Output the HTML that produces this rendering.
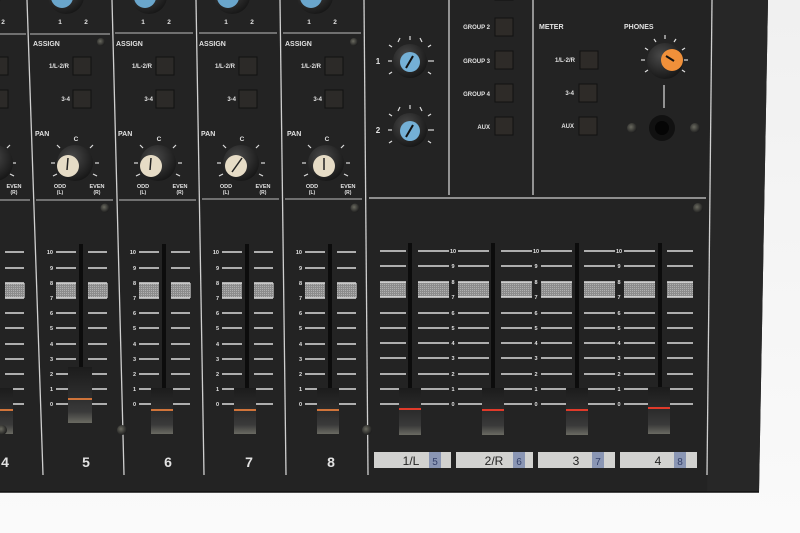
<!DOCTYPE html>
<html><head><meta charset="utf-8"><style>
html,body{margin:0;padding:0;background:#f2f2f2;}
svg{display:block}
text{font-family:"Liberation Sans",sans-serif;font-weight:bold;fill:#e2e2e2}
</style></head><body>
<svg width="800" height="533" viewBox="0 0 800 533" xmlns="http://www.w3.org/2000/svg">
<defs>
<linearGradient id="bg" x1="0" y1="0" x2="0" y2="1"><stop offset="0" stop-color="#f0f0f0"/><stop offset="1" stop-color="#fafafa"/></linearGradient>
<linearGradient id="cap" x1="0" y1="0" x2="0" y2="1"><stop offset="0" stop-color="#1c1c1c"/><stop offset="0.55" stop-color="#2e2e2e"/><stop offset="0.8" stop-color="#3a3a3a"/><stop offset="1" stop-color="#6a6a62"/></linearGradient>
<pattern id="mesh" width="2" height="2" patternUnits="userSpaceOnUse"><rect width="2" height="2" fill="#8c8c8c"/><rect width="1" height="1" fill="#b0b0b0"/></pattern>
<radialGradient id="knob" cx="0.4" cy="0.35" r="0.7"><stop offset="0" stop-color="#4a4a4a"/><stop offset="1" stop-color="#151515"/></radialGradient>
<radialGradient id="screw" cx="0.4" cy="0.4" r="0.6"><stop offset="0" stop-color="#6a6a60"/><stop offset="1" stop-color="#1e1e1e"/></radialGradient>
</defs>
<rect width="800" height="533" fill="url(#bg)"/>
<polygon points="0,0 768,0 759,492 0,492" fill="#232323"/>
<polygon points="712,0 768,0 759,492 707,492" fill="#272727"/>
<line x1="0" y1="492" x2="759" y2="492" stroke="#111" stroke-width="1.5"/>

<!-- channel dividers -->
<g stroke="#cfcfcf" stroke-width="1.3">
<line x1="27" y1="0" x2="43" y2="475"/>
<line x1="112" y1="0" x2="124" y2="475"/>
<line x1="196" y1="0" x2="204" y2="475"/>
<line x1="280" y1="0" x2="286" y2="475"/>
<line x1="364" y1="0" x2="368" y2="475"/>
<line x1="449" y1="0" x2="449" y2="195"/>
<line x1="533" y1="0" x2="533" y2="195"/>
<line x1="712" y1="0" x2="707" y2="475"/>
<line x1="369" y1="198" x2="706" y2="198"/>
</g>
<g stroke="#bdbdbd" stroke-width="1">
<line x1="0" y1="34" x2="26" y2="34"/><line x1="30" y1="34" x2="110" y2="34"/><line x1="115" y1="33" x2="193" y2="33"/><line x1="199" y1="33" x2="277" y2="33"/><line x1="283" y1="33" x2="361" y2="33"/>
<line x1="0" y1="200" x2="30" y2="200"/><line x1="36" y1="200" x2="113" y2="200"/><line x1="119" y1="200" x2="196" y2="200"/><line x1="202" y1="199" x2="279" y2="199"/><line x1="285" y1="199" x2="362" y2="199"/>
</g>

<!-- CHANNEL STRIPS: defined once per channel -->
<g id="chs">
<!-- ch5 at offset 0 -->
<g transform="translate(0,0)">
<circle cx="66" cy="-4" r="18" fill="url(#knob)"/><circle cx="62" cy="-3" r="11" fill="#6aa6cc"/>
<text x="60" y="24" font-size="6.5" text-anchor="middle">1</text><text x="86" y="24" font-size="6.5" text-anchor="middle">2</text>
<text x="33" y="46" font-size="7">ASSIGN</text><circle cx="101" cy="42" r="4" fill="url(#screw)"/>
<text x="69" y="68" font-size="6" text-anchor="end">1/L-2/R</text><rect x="73" y="57" width="18" height="18" fill="#2c2a28" stroke="#111"/>
<text x="70" y="101" font-size="6" text-anchor="end">3-4</text><rect x="73" y="90" width="18" height="18" fill="#2c2a28" stroke="#111"/>
<text x="35" y="136" font-size="7">PAN</text><text x="76" y="141" font-size="6.5" text-anchor="middle">C</text>
<g stroke="#ddd" stroke-width="1.2"><line x1="55" y1="163" x2="51" y2="163"/><line x1="95" y1="163" x2="99" y2="163"/><line x1="60" y1="148" x2="57" y2="145"/><line x1="90" y1="148" x2="93" y2="145"/><line x1="57" y1="174" x2="53" y2="176"/><line x1="93" y1="174" x2="97" y2="176"/></g>
<circle cx="75" cy="163" r="18" fill="url(#knob)"/><circle cx="68" cy="166" r="11" fill="#e6dcc6"/><line x1="68" y1="158" x2="67" y2="170" stroke="#222" stroke-width="1.5"/>
<text x="60" y="188" font-size="5.5" text-anchor="middle">ODD</text><text x="60" y="194" font-size="5" text-anchor="middle">(L)</text>
<text x="97" y="188" font-size="5.5" text-anchor="middle">EVEN</text><text x="97" y="194" font-size="5" text-anchor="middle">(R)</text>
<circle cx="105" cy="208" r="4.5" fill="url(#screw)"/>
<rect x="56" y="283" width="20" height="15" fill="url(#mesh)"/><rect x="88" y="283" width="20" height="15" fill="url(#mesh)"/>
<path d="M56 252H76M88 252H107M56 268H76M88 268H107M56 283H76M88 283H107M56 298H76M88 298H107M56 313H76M88 313H107M56 328H76M88 328H107M56 344H76M88 344H107M56 359H76M88 359H107M56 374H76M88 374H107M56 389H76M88 389H107M56 404H76M88 404H107" stroke="#dcdcdc" stroke-width="1.5"/>
<g font-size="5.5" text-anchor="end"><text x="53" y="254">10</text><text x="53" y="270">9</text><text x="53" y="285">8</text><text x="53" y="300">7</text><text x="53" y="315">6</text><text x="53" y="330">5</text><text x="53" y="346">4</text><text x="53" y="361">3</text><text x="53" y="376">2</text><text x="53" y="391">1</text><text x="53" y="406">0</text></g>
<rect x="79" y="244" width="4" height="140" fill="#0c0c0c"/>
<text x="86" y="467" font-size="14" text-anchor="middle">5</text>
</g>
</g>
<!-- ch6,7,8,4 -->
<g transform="translate(83,0)">
<circle cx="66" cy="-4" r="18" fill="url(#knob)"/><circle cx="62" cy="-3" r="11" fill="#6aa6cc"/>
<text x="60" y="24" font-size="6.5" text-anchor="middle">1</text><text x="86" y="24" font-size="6.5" text-anchor="middle">2</text>
<text x="33" y="46" font-size="7">ASSIGN</text>
<text x="69" y="68" font-size="6" text-anchor="end">1/L-2/R</text><rect x="73" y="57" width="18" height="18" fill="#2c2a28" stroke="#111"/>
<text x="70" y="101" font-size="6" text-anchor="end">3-4</text><rect x="73" y="90" width="18" height="18" fill="#2c2a28" stroke="#111"/>
<text x="35" y="136" font-size="7">PAN</text><text x="76" y="141" font-size="6.5" text-anchor="middle">C</text>
<g stroke="#ddd" stroke-width="1.2"><line x1="55" y1="163" x2="51" y2="163"/><line x1="95" y1="163" x2="99" y2="163"/><line x1="60" y1="148" x2="57" y2="145"/><line x1="90" y1="148" x2="93" y2="145"/><line x1="57" y1="174" x2="53" y2="176"/><line x1="93" y1="174" x2="97" y2="176"/></g>
<circle cx="75" cy="163" r="18" fill="url(#knob)"/><circle cx="68" cy="166" r="11" fill="#e6dcc6"/><line x1="68" y1="158" x2="67" y2="170" stroke="#222" stroke-width="1.5"/>
<text x="60" y="188" font-size="5.5" text-anchor="middle">ODD</text><text x="60" y="194" font-size="5" text-anchor="middle">(L)</text>
<text x="97" y="188" font-size="5.5" text-anchor="middle">EVEN</text><text x="97" y="194" font-size="5" text-anchor="middle">(R)</text>
<rect x="56" y="283" width="20" height="15" fill="url(#mesh)"/><rect x="88" y="283" width="20" height="15" fill="url(#mesh)"/>
<path d="M56 252H76M88 252H107M56 268H76M88 268H107M56 283H76M88 283H107M56 298H76M88 298H107M56 313H76M88 313H107M56 328H76M88 328H107M56 344H76M88 344H107M56 359H76M88 359H107M56 374H76M88 374H107M56 389H76M88 389H107M56 404H76M88 404H107" stroke="#dcdcdc" stroke-width="1.5"/>
<g font-size="5.5" text-anchor="end"><text x="53" y="254">10</text><text x="53" y="270">9</text><text x="53" y="285">8</text><text x="53" y="300">7</text><text x="53" y="315">6</text><text x="53" y="330">5</text><text x="53" y="346">4</text><text x="53" y="361">3</text><text x="53" y="376">2</text><text x="53" y="391">1</text><text x="53" y="406">0</text></g>
<rect x="79" y="244" width="4" height="150" fill="#0c0c0c"/>
<text x="85" y="467" font-size="14" text-anchor="middle">6</text>
</g>
<g transform="translate(166,0)">
<circle cx="66" cy="-4" r="18" fill="url(#knob)"/><circle cx="62" cy="-3" r="11" fill="#6aa6cc"/>
<text x="60" y="24" font-size="6.5" text-anchor="middle">1</text><text x="86" y="24" font-size="6.5" text-anchor="middle">2</text>
<text x="33" y="46" font-size="7">ASSIGN</text>
<text x="69" y="68" font-size="6" text-anchor="end">1/L-2/R</text><rect x="73" y="57" width="18" height="18" fill="#2c2a28" stroke="#111"/>
<text x="70" y="101" font-size="6" text-anchor="end">3-4</text><rect x="73" y="90" width="18" height="18" fill="#2c2a28" stroke="#111"/>
<text x="35" y="136" font-size="7">PAN</text><text x="76" y="141" font-size="6.5" text-anchor="middle">C</text>
<g stroke="#ddd" stroke-width="1.2"><line x1="55" y1="163" x2="51" y2="163"/><line x1="95" y1="163" x2="99" y2="163"/><line x1="60" y1="148" x2="57" y2="145"/><line x1="90" y1="148" x2="93" y2="145"/><line x1="57" y1="174" x2="53" y2="176"/><line x1="93" y1="174" x2="97" y2="176"/></g>
<circle cx="75" cy="163" r="18" fill="url(#knob)"/><circle cx="70" cy="166" r="11" fill="#e6dcc6"/><line x1="76" y1="158" x2="66" y2="172" stroke="#222" stroke-width="1.5"/>
<text x="60" y="188" font-size="5.5" text-anchor="middle">ODD</text><text x="60" y="194" font-size="5" text-anchor="middle">(L)</text>
<text x="97" y="188" font-size="5.5" text-anchor="middle">EVEN</text><text x="97" y="194" font-size="5" text-anchor="middle">(R)</text>
<rect x="56" y="283" width="20" height="15" fill="url(#mesh)"/><rect x="88" y="283" width="20" height="15" fill="url(#mesh)"/>
<path d="M56 252H76M88 252H107M56 268H76M88 268H107M56 283H76M88 283H107M56 298H76M88 298H107M56 313H76M88 313H107M56 328H76M88 328H107M56 344H76M88 344H107M56 359H76M88 359H107M56 374H76M88 374H107M56 389H76M88 389H107M56 404H76M88 404H107" stroke="#dcdcdc" stroke-width="1.5"/>
<g font-size="5.5" text-anchor="end"><text x="53" y="254">10</text><text x="53" y="270">9</text><text x="53" y="285">8</text><text x="53" y="300">7</text><text x="53" y="315">6</text><text x="53" y="330">5</text><text x="53" y="346">4</text><text x="53" y="361">3</text><text x="53" y="376">2</text><text x="53" y="391">1</text><text x="53" y="406">0</text></g>
<rect x="79" y="244" width="4" height="150" fill="#0c0c0c"/>
<text x="83" y="467" font-size="14" text-anchor="middle">7</text>
</g>
<g transform="translate(249,0)">
<circle cx="66" cy="-4" r="18" fill="url(#knob)"/><circle cx="62" cy="-3" r="11" fill="#6aa6cc"/>
<text x="60" y="24" font-size="6.5" text-anchor="middle">1</text><text x="86" y="24" font-size="6.5" text-anchor="middle">2</text>
<text x="36" y="46" font-size="7">ASSIGN</text><circle cx="105" cy="42" r="4" fill="url(#screw)"/>
<text x="72" y="68" font-size="6" text-anchor="end">1/L-2/R</text><rect x="76" y="57" width="18" height="18" fill="#2c2a28" stroke="#111"/>
<text x="73" y="101" font-size="6" text-anchor="end">3-4</text><rect x="76" y="90" width="18" height="18" fill="#2c2a28" stroke="#111"/>
<text x="38" y="136" font-size="7">PAN</text><text x="78" y="141" font-size="6.5" text-anchor="middle">C</text>
<g stroke="#ddd" stroke-width="1.2"><line x1="57" y1="163" x2="53" y2="163"/><line x1="97" y1="163" x2="101" y2="163"/><line x1="62" y1="148" x2="59" y2="145"/><line x1="92" y1="148" x2="95" y2="145"/><line x1="59" y1="174" x2="55" y2="176"/><line x1="95" y1="174" x2="99" y2="176"/></g>
<circle cx="77" cy="163" r="18" fill="url(#knob)"/><circle cx="75" cy="166" r="11" fill="#e6dcc6"/><line x1="75" y1="158" x2="75" y2="170" stroke="#222" stroke-width="1.5"/>
<text x="63" y="188" font-size="5.5" text-anchor="middle">ODD</text><text x="63" y="194" font-size="5" text-anchor="middle">(L)</text>
<text x="99" y="188" font-size="5.5" text-anchor="middle">EVEN</text><text x="99" y="194" font-size="5" text-anchor="middle">(R)</text>
<circle cx="106" cy="208" r="4.5" fill="url(#screw)"/>
<rect x="56" y="283" width="20" height="15" fill="url(#mesh)"/><rect x="88" y="283" width="20" height="15" fill="url(#mesh)"/>
<path d="M56 252H76M88 252H107M56 268H76M88 268H107M56 283H76M88 283H107M56 298H76M88 298H107M56 313H76M88 313H107M56 328H76M88 328H107M56 344H76M88 344H107M56 359H76M88 359H107M56 374H76M88 374H107M56 389H76M88 389H107M56 404H76M88 404H107" stroke="#dcdcdc" stroke-width="1.5"/>
<g font-size="5.5" text-anchor="end"><text x="53" y="254">10</text><text x="53" y="270">9</text><text x="53" y="285">8</text><text x="53" y="300">7</text><text x="53" y="315">6</text><text x="53" y="330">5</text><text x="53" y="346">4</text><text x="53" y="361">3</text><text x="53" y="376">2</text><text x="53" y="391">1</text><text x="53" y="406">0</text></g>
<rect x="79" y="244" width="4" height="150" fill="#0c0c0c"/>
<text x="82" y="467" font-size="14" text-anchor="middle">8</text>
</g>
<g transform="translate(-83,0)">
<circle cx="66" cy="-4" r="18" fill="url(#knob)"/><circle cx="62" cy="-3" r="11" fill="#6aa6cc"/>
<text x="86" y="24" font-size="6.5" text-anchor="middle">2</text>
<rect x="73" y="57" width="18" height="18" fill="#2c2a28" stroke="#111"/><rect x="73" y="90" width="18" height="18" fill="#2c2a28" stroke="#111"/>
<g stroke="#ddd" stroke-width="1.2"><line x1="95" y1="163" x2="99" y2="163"/><line x1="90" y1="148" x2="93" y2="145"/><line x1="93" y1="174" x2="97" y2="176"/></g>
<circle cx="78" cy="163" r="18" fill="url(#knob)"/>
<text x="97" y="188" font-size="5.5" text-anchor="middle">EVEN</text><text x="97" y="194" font-size="5" text-anchor="middle">(R)</text>
<rect x="88" y="283" width="20" height="15" fill="url(#mesh)"/>
<path d="M88 252H107M88 268H107M88 283H107M88 298H107M88 313H107M88 328H107M88 344H107M88 359H107M88 374H107M88 389H107M88 404H107" stroke="#dcdcdc" stroke-width="1.5"/>
<rect x="79" y="244" width="4" height="150" fill="#0c0c0c"/>
<text x="88" y="467" font-size="14" text-anchor="middle">4</text>
</g>

<!-- channel fader caps -->
<g>
<rect x="-5" y="388" width="18" height="46" fill="url(#cap)"/><rect x="-5" y="409" width="18" height="2" fill="#d0743a"/>
<rect x="68" y="367" width="24" height="56" fill="url(#cap)"/><rect x="68" y="398" width="24" height="2" fill="#d0743a"/>
<rect x="151" y="388" width="22" height="46" fill="url(#cap)"/><rect x="151" y="409" width="22" height="2" fill="#d0743a"/>
<rect x="234" y="388" width="22" height="46" fill="url(#cap)"/><rect x="234" y="409" width="22" height="2" fill="#d0743a"/>
<rect x="317" y="388" width="22" height="46" fill="url(#cap)"/><rect x="317" y="409" width="22" height="2" fill="#d0743a"/>
</g>
<circle cx="122" cy="430" r="5" fill="url(#screw)"/><circle cx="367" cy="430" r="5" fill="url(#screw)"/><circle cx="2" cy="430" r="5" fill="url(#screw)"/>

<!-- RIGHT TOP SECTION -->
<text x="378" y="64" font-size="8" text-anchor="middle">1</text>
<text x="378" y="133" font-size="8" text-anchor="middle">2</text>
<g stroke="#ddd" stroke-width="1.2">
<line x1="388" y1="61" x2="392" y2="61"/><line x1="428" y1="61" x2="434" y2="61"/><line x1="410" y1="36" x2="410" y2="40"/><line x1="400" y1="38" x2="398" y2="42"/><line x1="420" y1="38" x2="422" y2="42"/><line x1="392" y1="47" x2="389" y2="45"/><line x1="428" y1="47" x2="431" y2="45"/><line x1="392" y1="72" x2="389" y2="74"/><line x1="428" y1="72" x2="431" y2="74"/>
<line x1="388" y1="130" x2="392" y2="130"/><line x1="428" y1="130" x2="434" y2="130"/><line x1="410" y1="105" x2="410" y2="109"/><line x1="400" y1="107" x2="398" y2="111"/><line x1="420" y1="107" x2="422" y2="111"/><line x1="392" y1="116" x2="389" y2="114"/><line x1="428" y1="116" x2="431" y2="114"/><line x1="392" y1="141" x2="389" y2="143"/><line x1="428" y1="141" x2="431" y2="143"/>
</g>
<circle cx="410" cy="61" r="17" fill="url(#knob)"/><circle cx="410" cy="62" r="10" fill="#74b0d6"/><line x1="413" y1="56" x2="406" y2="68" stroke="#111" stroke-width="2"/>
<circle cx="410" cy="130" r="17" fill="url(#knob)"/><circle cx="410" cy="131" r="10" fill="#74b0d6"/><line x1="413" y1="125" x2="406" y2="137" stroke="#111" stroke-width="2"/>

<rect x="495" y="-8" width="18" height="8" fill="#2c2a28" stroke="#111"/>
<g font-size="6" text-anchor="end">
<text x="490" y="29">GROUP 2</text><text x="490" y="63">GROUP 3</text><text x="490" y="96">GROUP 4</text><text x="490" y="129">AUX</text>
<text x="575" y="62">1/L-2/R</text><text x="574" y="95">3-4</text><text x="574" y="128">AUX</text>
</g>
<g fill="#2e2b28" stroke="#111">
<rect x="495" y="18" width="18" height="18"/><rect x="495" y="51" width="18" height="18"/><rect x="495" y="84" width="18" height="18"/><rect x="495" y="117" width="18" height="18"/>
<rect x="580" y="51" width="18" height="18"/><rect x="579" y="84" width="18" height="18"/><rect x="579" y="117" width="18" height="18"/>
</g>
<text x="539" y="29" font-size="7">METER</text>
<text x="624" y="29" font-size="7">PHONES</text>
<g stroke="#ddd" stroke-width="1.2">
<line x1="641" y1="60" x2="645" y2="60"/><line x1="684" y1="60" x2="688" y2="60"/><line x1="665" y1="35" x2="665" y2="39"/><line x1="654" y1="39" x2="656" y2="42"/><line x1="676" y1="39" x2="674" y2="42"/><line x1="645" y1="48" x2="648" y2="50"/><line x1="685" y1="48" x2="682" y2="50"/><line x1="645" y1="72" x2="648" y2="70"/><line x1="685" y1="72" x2="682" y2="70"/>
<line x1="664" y1="85" x2="664" y2="108"/>
</g>
<circle cx="665" cy="61" r="18" fill="url(#knob)"/><circle cx="672" cy="60" r="11" fill="#f0903a"/><line x1="666" y1="56" x2="674" y2="61" stroke="#111" stroke-width="2"/>
<circle cx="662" cy="128" r="13" fill="#111"/><circle cx="662" cy="128" r="7" fill="#050505"/>
<circle cx="632" cy="128" r="5" fill="url(#screw)"/><circle cx="695" cy="128" r="5" fill="url(#screw)"/>
<circle cx="698" cy="208" r="5" fill="url(#screw)"/>

<!-- RIGHT GROUP FADERS -->
<g fill="url(#mesh)">
<rect x="380" y="282" width="26" height="15"/><rect x="418" y="282" width="31" height="15"/><rect x="458" y="282" width="31" height="15"/><rect x="501" y="282" width="31" height="15"/><rect x="541" y="282" width="31" height="15"/><rect x="584" y="282" width="31" height="15"/><rect x="624" y="282" width="31" height="15"/><rect x="667" y="282" width="26" height="15"/>
</g>
<path d="M380 251H406M418 251H449M458 251H489M501 251H532M541 251H572M584 251H615M624 251H655M667 251H693M380 266H406M418 266H449M458 266H489M501 266H532M541 266H572M584 266H615M624 266H655M667 266H693M380 282H406M418 282H449M458 282H489M501 282H532M541 282H572M584 282H615M624 282H655M667 282H693M380 297H406M418 297H449M458 297H489M501 297H532M541 297H572M584 297H615M624 297H655M667 297H693M380 313H406M418 313H449M458 313H489M501 313H532M541 313H572M584 313H615M624 313H655M667 313H693M380 328H406M418 328H449M458 328H489M501 328H532M541 328H572M584 328H615M624 328H655M667 328H693M380 343H406M418 343H449M458 343H489M501 343H532M541 343H572M584 343H615M624 343H655M667 343H693M380 358H406M418 358H449M458 358H489M501 358H532M541 358H572M584 358H615M624 358H655M667 358H693M380 374H406M418 374H449M458 374H489M501 374H532M541 374H572M584 374H615M624 374H655M667 374H693M380 389H406M418 389H449M458 389H489M501 389H532M541 389H572M584 389H615M624 389H655M667 389H693M380 404H406M418 404H449M458 404H489M501 404H532M541 404H572M584 404H615M624 404H655M667 404H693" stroke="#dcdcdc" stroke-width="1.5"/>
<g font-size="5.5" text-anchor="middle">
<text x="453" y="253">10</text><text x="453" y="268">9</text><text x="453" y="284">8</text><text x="453" y="299">7</text><text x="453" y="315">6</text><text x="453" y="330">5</text><text x="453" y="345">4</text><text x="453" y="360">3</text><text x="453" y="376">2</text><text x="453" y="391">1</text><text x="453" y="406">0</text>
<text x="536" y="253">10</text><text x="536" y="268">9</text><text x="536" y="284">8</text><text x="536" y="299">7</text><text x="536" y="315">6</text><text x="536" y="330">5</text><text x="536" y="345">4</text><text x="536" y="360">3</text><text x="536" y="376">2</text><text x="536" y="391">1</text><text x="536" y="406">0</text>
<text x="619" y="253">10</text><text x="619" y="268">9</text><text x="619" y="284">8</text><text x="619" y="299">7</text><text x="619" y="315">6</text><text x="619" y="330">5</text><text x="619" y="345">4</text><text x="619" y="360">3</text><text x="619" y="376">2</text><text x="619" y="391">1</text><text x="619" y="406">0</text>
</g>
<g fill="#0c0c0c">
<rect x="408" y="243" width="4" height="150"/><rect x="491" y="243" width="4" height="150"/><rect x="575" y="243" width="4" height="150"/><rect x="658" y="243" width="4" height="150"/>
</g>
<g>
<rect x="399" y="388" width="22" height="47" fill="url(#cap)"/><rect x="399" y="408" width="22" height="2" fill="#e03a2a"/>
<rect x="482" y="388" width="22" height="47" fill="url(#cap)"/><rect x="482" y="409" width="22" height="2" fill="#e03a2a"/>
<rect x="566" y="388" width="22" height="47" fill="url(#cap)"/><rect x="566" y="409" width="22" height="2" fill="#e03a2a"/>
<rect x="648" y="387" width="22" height="47" fill="url(#cap)"/><rect x="648" y="407" width="22" height="2" fill="#e03a2a"/>
</g>
<g>
<rect x="374" y="452" width="77" height="16" fill="#d2d2d0"/><rect x="429" y="452" width="12" height="16" fill="#8a96b4"/>
<rect x="456" y="452" width="77" height="16" fill="#d2d2d0"/><rect x="513" y="452" width="12" height="16" fill="#8a96b4"/>
<rect x="538" y="452" width="77" height="16" fill="#d2d2d0"/><rect x="592" y="452" width="12" height="16" fill="#8a96b4"/>
<rect x="620" y="452" width="77" height="16" fill="#d2d2d0"/><rect x="674" y="452" width="12" height="16" fill="#8a96b4"/>
</g>
<g font-size="12" style="font-weight:normal">
<text x="411" y="465" text-anchor="middle" style="fill:#222;font-weight:normal">1/L</text><text x="435" y="465" font-size="10" text-anchor="middle" style="fill:#34406a;font-weight:normal">5</text>
<text x="494" y="465" text-anchor="middle" style="fill:#222;font-weight:normal">2/R</text><text x="519" y="465" font-size="10" text-anchor="middle" style="fill:#34406a;font-weight:normal">6</text>
<text x="576" y="465" text-anchor="middle" style="fill:#222;font-weight:normal">3</text><text x="598" y="465" font-size="10" text-anchor="middle" style="fill:#34406a;font-weight:normal">7</text>
<text x="658" y="465" text-anchor="middle" style="fill:#222;font-weight:normal">4</text><text x="680" y="465" font-size="10" text-anchor="middle" style="fill:#34406a;font-weight:normal">8</text>
</g>
</svg>
</body></html>
